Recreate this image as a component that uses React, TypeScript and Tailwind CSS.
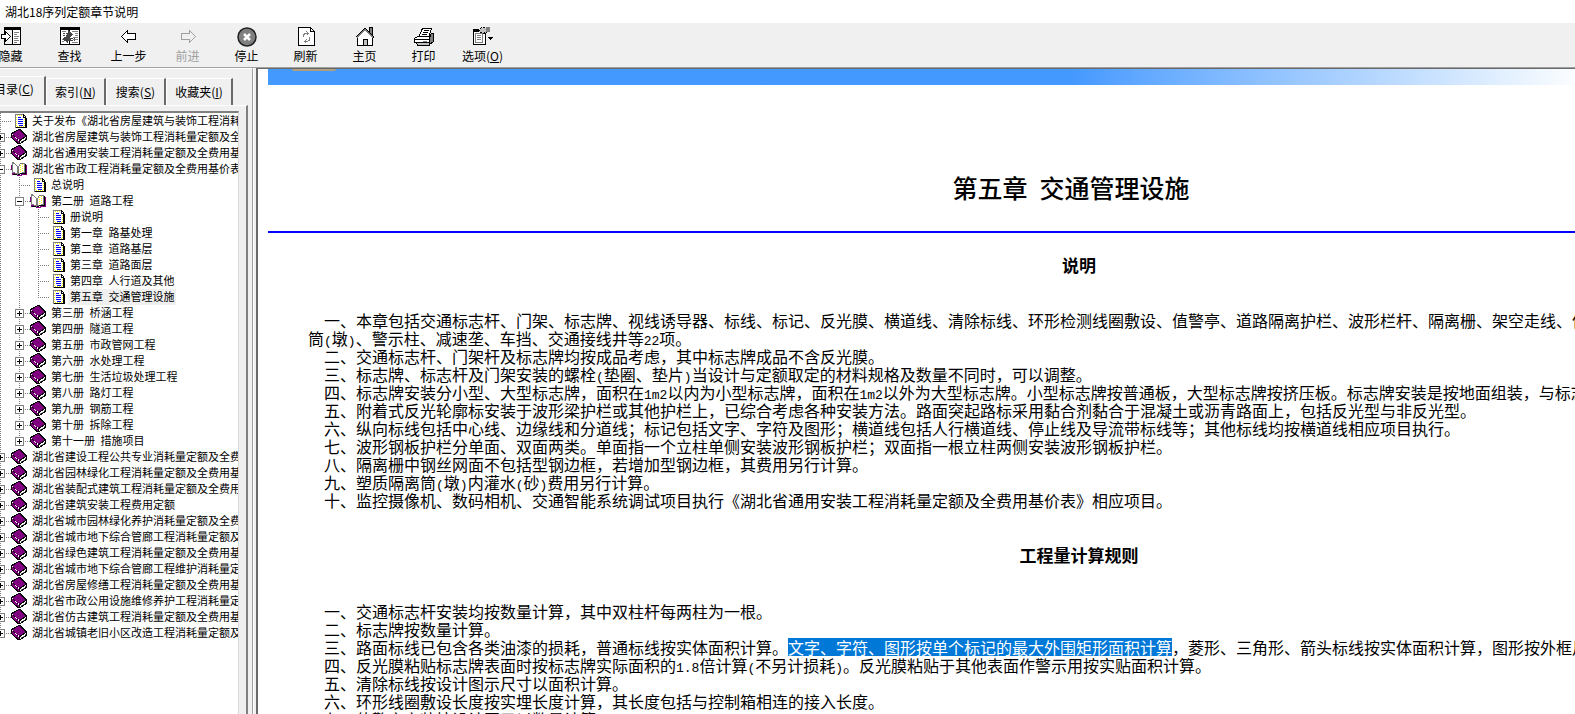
import React, { useState } from "react";
import clsx from "clsx";

type TreeItem = {
  label: string;
  kind?: "page";
  open?: boolean;
  children?: TreeItem[];
};

const toc: TreeItem[] = [
  { label: "关于发布《湖北省房屋建筑与装饰工程消耗量定额及全费用基价表》", kind: "page" },
  { label: "湖北省房屋建筑与装饰工程消耗量定额及全费用基价表", children: [] },
  { label: "湖北省通用安装工程消耗量定额及全费用基价表", children: [] },
  {
    label: "湖北省市政工程消耗量定额及全费用基价表",
    open: true,
    children: [
      { label: "总说明", kind: "page" },
      {
        label: "第二册 道路工程",
        open: true,
        children: [
          { label: "册说明", kind: "page" },
          { label: "第一章 路基处理", kind: "page" },
          { label: "第二章 道路基层", kind: "page" },
          { label: "第三章 道路面层", kind: "page" },
          { label: "第四章 人行道及其他", kind: "page" },
          { label: "第五章 交通管理设施", kind: "page" },
        ],
      },
      { label: "第三册 桥涵工程", children: [] },
      { label: "第四册 隧道工程", children: [] },
      { label: "第五册 市政管网工程", children: [] },
      { label: "第六册 水处理工程", children: [] },
      { label: "第七册 生活垃圾处理工程", children: [] },
      { label: "第八册 路灯工程", children: [] },
      { label: "第九册 钢筋工程", children: [] },
      { label: "第十册 拆除工程", children: [] },
      { label: "第十一册 措施项目", children: [] },
    ],
  },
  { label: "湖北省建设工程公共专业消耗量定额及全费用基价表", children: [] },
  { label: "湖北省园林绿化工程消耗量定额及全费用基价表", children: [] },
  { label: "湖北省装配式建筑工程消耗量定额及全费用基价表", children: [] },
  { label: "湖北省建筑安装工程费用定额", children: [] },
  { label: "湖北省城市园林绿化养护消耗量定额及全费用基价表", children: [] },
  { label: "湖北省城市地下综合管廊工程消耗量定额及全费用基价表", children: [] },
  { label: "湖北省绿色建筑工程消耗量定额及全费用基价表", children: [] },
  { label: "湖北省城市地下综合管廊工程维护消耗量定额", children: [] },
  { label: "湖北省房屋修缮工程消耗量定额及全费用基价表", children: [] },
  { label: "湖北省市政公用设施维修养护工程消耗量定额", children: [] },
  { label: "湖北省仿古建筑工程消耗量定额及全费用基价表", children: [] },
  { label: "湖北省城镇老旧小区改造工程消耗量定额及全费用基价表", children: [] },
];

const notes = [
  "一、本章包括交通标志杆、门架、标志牌、视线诱导器、标线、标记、反光膜、横道线、清除标线、环形检测线圈敷设、值警亭、道路隔离护栏、波形栏杆、隔离栅、架空走线、信\n筒(墩)、警示柱、减速垄、车挡、交通接线井等22项。",
  "二、交通标志杆、门架杆及标志牌均按成品考虑，其中标志牌成品不含反光膜。",
  "三、标志牌、标志杆及门架安装的螺栓(垫圈、垫片)当设计与定额取定的材料规格及数量不同时，可以调整。",
  "四、标志牌安装分小型、大型标志牌，面积在1m2以内为小型标志牌，面积在1m2以外为大型标志牌。小型标志牌按普通板，大型标志牌按挤压板。标志牌安装是按地面组装，与标志",
  "五、附着式反光轮廓标安装于波形梁护栏或其他护栏上，已综合考虑各种安装方法。路面突起路标采用黏合剂黏合于混凝土或沥青路面上，包括反光型与非反光型。",
  "六、纵向标线包括中心线、边缘线和分道线；标记包括文字、字符及图形；横道线包括人行横道线、停止线及导流带标线等；其他标线均按横道线相应项目执行。",
  "七、波形钢板护栏分单面、双面两类。单面指一个立柱单侧安装波形钢板护栏；双面指一根立柱两侧安装波形钢板护栏。",
  "八、隔离栅中钢丝网面不包括型钢边框，若增加型钢边框，其费用另行计算。",
  "九、塑质隔离筒(墩)内灌水(砂)费用另行计算。",
  "十、监控摄像机、数码相机、交通智能系统调试项目执行《湖北省通用安装工程消耗量定额及全费用基价表》相应项目。",
];

// Half-width characters are set in the monospaced face
function Mixed({ text, latin }: { text: string; latin: string }) {
  return (
    <>
      {text.split(/([ -~]+)/).map((part, i) =>
        i % 2 ? (
          <span key={i} className={clsx("font-['Liberation_Mono'] whitespace-pre", latin)}>
            {part}
          </span>
        ) : (
          part
        ),
      )}
    </>
  );
}

function Para({ children }: { children: React.ReactNode }) {
  return (
    <p className="indent-4 whitespace-pre">
      {React.Children.map(children, (c) =>
        typeof c === "string" ? <Mixed text={c} latin="text-[13px] leading-[0]" /> : c,
      )}
    </p>
  );
}

/* ---------- tree icons ---------- */

function PageIcon() {
  return (
    <svg width="16" height="16" viewBox="0 0 16 16" shapeRendering="crispEdges">
      <path d="M4 1h8l3 3v11H4z" fill="#fff" />
      <path d="M4 1h8v1H4zM4 1h1v14H4z" fill="#808080" />
      <path d="M5 14h10v1H5zM14 4h1v11h-1zM12 1h1v3h2v1h-3zM13 2h1v1h-1zM14 3h1v1h-1z" fill="#000" />
      <path d="M15 5h1v10h-1z" fill="#000" />
      <path d="M6 2.500h5M5.500 4v10M6 13.500h7M13.500 6v8" stroke="#ff0" strokeDasharray="1 1" fill="none" />
      <path d="M7 4h3v1H7zM7 6h5v1H7zM7 8h5v1H7zM7 10h5v1H7zM8 12h4v1H8z" fill="#00f" />
    </svg>
  );
}

function BookIcon() {
  return (
    <svg width="16" height="16" viewBox="0 0 16 16" shapeRendering="crispEdges">
      <path d="M8 0h1l7 7v4l-7 4H7L0 9V4z" fill="#000" />
      <path d="M8 1l7 6-7 4-7-6z" fill="#800080" />
      <path d="M1 6l7 6v2L1 9z" fill="#800080" />
      <path d="M9 12l6-4v2l-6 4z" fill="#fff" />
      <path d="M10 13h1v-1h-1zM12 12h1v-1h-1zM14 10h1V9h-1z" fill="#808080" />
      <path d="M1 5.500l7 6" stroke="#fff" strokeDasharray="1 1" fill="none" />
    </svg>
  );
}

function OpenBookIcon() {
  return (
    <svg width="16" height="16" viewBox="0 0 16 16" shapeRendering="crispEdges">
      <path d="M0 4h2v8h4l2 2h1l1-1h5V4h1v10h-5l-1 1H7l-2-1H1z" fill="#800080" />
      <path d="M1.500 1.500l2 1 3 3v8l-3-2h-2z" fill="#fff" stroke="#808080" />
      <path d="M7.500 5.500l2-3h4v9l-4 1-2 1z" fill="#fff" stroke="#808080" />
      <path d="M14.500 3v9h-4l-3 2" fill="none" stroke="#000" />
      <path d="M9.500 4v7M11.500 3v8" stroke="#ff0" strokeDasharray="1 1" />
      <path d="M2 13h4v1H2z" fill="#000" />
    </svg>
  );
}

function Guide({ vertical, joint }: { vertical: "full" | "half" | "none"; joint?: boolean }) {
  return (
    <svg width="19" height="16" viewBox="0 0 19 16" className="shrink-0" shapeRendering="crispEdges">
      {vertical !== "none" && (
        <path
          d={vertical === "full" ? "M8.500 0v16" : "M8.500 0v8"}
          stroke="#808080"
          strokeDasharray="1 1"
        />
      )}
      {joint && <path d="M8 8.500h11" stroke="#808080" strokeDasharray="1 1" />}
    </svg>
  );
}

function Branch({ items, rails, selected, onSelect }: {
  items: TreeItem[];
  rails: boolean[];
  selected: string;
  onSelect: (label: string) => void;
}) {
  return (
    <ul>
      {items.map((item, i) => (
        <Node
          key={item.label}
          item={item}
          rails={rails}
          last={i === items.length - 1}
          selected={selected}
          onSelect={onSelect}
        />
      ))}
    </ul>
  );
}

function Node({ item, rails, last, selected, onSelect }: {
  item: TreeItem;
  rails: boolean[];
  last: boolean;
  selected: string;
  onSelect: (label: string) => void;
}) {
  const [open, setOpen] = useState(!!item.open);

  return (
    <li>
      <div className="flex h-4 items-center">
        {rails.map((on, i) => (
          <Guide key={i} vertical={on ? "full" : "none"} />
        ))}
        <div className="relative flex">
          <Guide vertical={last ? "half" : "full"} joint />
          {item.children && (
            <button
              aria-label={open ? "折叠" : "展开"}
              onClick={() => setOpen(!open)}
              className="absolute top-1 left-1 h-[9px] w-[9px] bg-white"
            >
              <svg width="9" height="9" viewBox="0 0 9 9" shapeRendering="crispEdges">
                <path d="M0 0h9v9H0zM1 1v7h7V1z" fill="#808080" fillRule="evenodd" />
                <path d="M2 4h5v1H2z" fill="#000" />
                {!open && <path d="M4 2h1v5H4z" fill="#000" />}
              </svg>
            </button>
          )}
        </div>
        <span className="shrink-0">
          {item.kind === "page" ? <PageIcon /> : open ? <OpenBookIcon /> : <BookIcon />}
        </span>
        <button
          onClick={() => onSelect(item.label)}
          className={clsx(
            "ml-[3px] h-4 shrink-0 px-0.5 pb-0.5 leading-[14px] whitespace-pre",
            selected === item.label && "bg-[#f0f0f0]",
          )}
        >
          <Mixed text={item.label} latin="text-[9px] leading-[0]" />
        </button>
      </div>
      {open && item.children && (
        <Branch items={item.children} rails={[...rails, !last]} selected={selected} onSelect={onSelect} />
      )}
    </li>
  );
}

/* ---------- toolbar ---------- */

function Glyph({ children }: { children: React.ReactNode }) {
  return (
    <svg width="20" height="20" viewBox="0 0 20 20" shapeRendering="crispEdges" fill="none">
      {children}
    </svg>
  );
}

const tools: { label: React.ReactNode; id: string; disabled?: boolean; icon: React.ReactNode }[] = [
  {
    id: "hide",
    label: "隐藏",
    icon: (
      <Glyph>
        <path d="M3 0h17v18H3z" fill="#000" />
        <path d="M4 3h7v14H4z" fill="#f0f0f0" />
        <path d="M12 3h7v14h-7z" fill="#fff" />
        <path d="M13 5.500h5M13 7.500h3M13 9.500h5M13 11.500h4M13 13.500h5M13 15.500h3" stroke="#808080" />
        <path d="M.5 7.500h4v-3l5 5-5 5v-3h-4z" fill="#fff" stroke="#000" />
      </Glyph>
    ),
  },
  {
    id: "find",
    label: "查找",
    icon: (
      <Glyph>
        <path d="M0 0h20v18H0z" fill="#000" />
        <path d="M1 3h8v14H1zM10 3h9v14h-9z" fill="#fff" />
        <path d="M2 4.500h4M2 12.500h1M2 14.500h2M12 4.500h6M15 6.500h3M15 8.500h3M13 10.500h5M13 12.500h5M12 15.500h6" stroke="#808080" />
        <path d="M3 6.500h4M3 8.500h4" stroke="#444" strokeDasharray="2 1" />
        <path d="M8 3l5 4-5 5V9H7V6h1z" fill="#444" />
        <path d="M8 8v3h3v3H8v2l-6-4z" fill="#444" />
        <path d="M11 11.500h4M11 13.500h4" stroke="#444" strokeDasharray="2 1" />
      </Glyph>
    ),
  },
  {
    id: "back",
    label: "上一步",
    icon: (
      <Glyph>
        <path d="M2.500 9.500l6-6v3h8v6h-8v3z" fill="#fff" stroke="#000" />
      </Glyph>
    ),
  },
  {
    id: "forward",
    label: "前进",
    disabled: true,
    icon: (
      <Glyph>
        <path d="M17.500 9.500l-6-6v3h-8v6h8v3z" fill="#f0f0f0" stroke="#a0a0a0" />
      </Glyph>
    ),
  },
  {
    id: "stop",
    label: "停止",
    icon: (
      <svg width="20" height="20" viewBox="0 0 20 20">
        <circle cx="10" cy="10" r="9" fill="#808080" stroke="#222" strokeWidth="1.500" />
        <path d="M7 7l6 6M13 7l-6 6" stroke="#fff" strokeWidth="2.500" />
      </svg>
    ),
  },
  {
    id: "refresh",
    label: "刷新",
    icon: (
      <Glyph>
        <path d="M2.500.5h12l4 4v14h-16z" fill="#fff" stroke="#000" />
        <path d="M14.500.5v4h4" stroke="#000" />
        <path d="M7.500 10V7.500l2-1h3M10.500 4.500l2 2-2 2M13.500 10v3l-2 1.500h-3M10.500 12.500l-2 2 2 2" stroke="#808080" />
      </Glyph>
    ),
  },
  {
    id: "home",
    label: "主页",
    icon: (
      <Glyph>
        <path d="M14 0h3v8h-3z" fill="#808080" stroke="#000" />
        <path d="M2.500 9v9.500h15V9L10 3z" fill="#fff" stroke="#000" />
        <path d="M.5 10.500L10 1l9 9.500" stroke="#000" />
        <path d="M2 10.500l8-8 8 8" stroke="#808080" strokeWidth="1.500" />
        <path d="M8.500 12.500h4v6h-4z" fill="#c0c0c0" stroke="#000" />
      </Glyph>
    ),
  },
  {
    id: "print",
    label: "打印",
    icon: (
      <Glyph>
        <path d="M4.500 10.500l4-9h9l-3 9z" fill="#fff" stroke="#000" />
        <path d="M10 3.500h5M9 5.500h5M8 7.500h5" stroke="#000" />
        <path d="M14.500 11.500l3-5h2v8l-4 3z" fill="#808080" stroke="#000" />
        <path d="M.5 11.500l3-2h13l-2 3H.5zM.5 12.500h15v3H.5z" fill="#fff" stroke="#000" />
        <path d="M2.500 15.500h13v3h-12z" fill="#c0c0c0" stroke="#000" />
        <path d="M9 14.500h4" stroke="#808080" />
      </Glyph>
    ),
  },
  {
    id: "options",
    label: (
      <>
        选项(<u>O</u>)
      </>
    ),
    icon: (
      <Glyph>
        <path d="M0 2h6v3H0z" fill="#000" />
        <path d="M.5 4.500h12v13H.5z" fill="#fff" stroke="#000" />
        <path d="M2.500 6.500h7v9h-7z" fill="#fff" stroke="#808080" />
        <path d="M4 8.500h4M4 10.500h4M4 12.500h4" stroke="#808080" />
        <path d="M5.500 4.500l3-4h6v4l-4 2z" fill="#c0c0c0" stroke="#000" strokeDasharray="2 1" />
        <path d="M13 0h4v5h-4z" fill="#808080" />
        <path d="M15 10h5l-2.500 3z" fill="#000" />
      </Glyph>
    ),
  },
];

const tabs = [
  { id: "contents", label: "目录", hotkey: "C", width: "w-[62px]" },
  { id: "index", label: "索引", hotkey: "N", width: "w-[60px]" },
  { id: "search", label: "搜索", hotkey: "S", width: "w-[60px]" },
  { id: "favorites", label: "收藏夹", hotkey: "I", width: "w-[67px]" },
];

function App() {
  const [tab, setTab] = useState("contents");
  const [selected, setSelected] = useState("第五章 交通管理设施");

  return (
    <div className="flex h-screen flex-col overflow-hidden bg-white font-['Noto_Sans_CJK_SC',sans-serif] text-xs text-black">
      <header className="h-[23px] shrink-0 pl-[5px] leading-[23px]">湖北18序列定额章节说明</header>

      {/* Toolbar */}
      <div className="h-[45px] shrink-0 overflow-hidden border-b border-[#a0a0a0] bg-[#f0f0f0]">
        <div className="-ml-[19px] flex pt-1">
          {tools.map((t) => (
            <button
              key={t.id}
              disabled={t.disabled}
              className="flex w-[59px] shrink-0 flex-col items-center leading-[18px] disabled:text-[#a0a0a0]"
            >
              {t.icon}
              <span>{t.label}</span>
            </button>
          ))}
        </div>
      </div>

      <div className="flex min-h-0 flex-1">
        {/* Navigation pane */}
        <aside className="flex w-[253px] shrink-0 flex-col overflow-hidden border-t border-r border-t-white border-r-[#a0a0a0] bg-[#f0f0f0] pr-1">
          <div className="-ml-4 flex h-9 items-end" role="tablist">
            {tabs.map((t) => (
              <button
                key={t.id}
                role="tab"
                aria-selected={tab === t.id}
                onClick={() => setTab(t.id)}
                className={clsx(
                  "shrink-0 border-t border-r-2 border-t-white border-r-[#696969]",
                  t.width,
                  tab === t.id ? "h-[29px] pb-1" : "h-[27px] border-l border-l-white",
                )}
              >
                {t.label}(<u>{t.hotkey}</u>)
              </button>
            ))}
          </div>
          <div className="flex min-h-0 flex-1 flex-col border-t border-r-2 border-t-white border-r-[#808080] pt-[5px] pr-[7px]">
            <div className="min-h-0 flex-1 overflow-hidden border-t-2 border-r border-t-[#808080] border-r-[#d9d9d9] bg-white text-[11px]">
              <nav className="-ml-2">
                <Branch items={toc} rails={[]} selected={selected} onSelect={setSelected} />
              </nav>
            </div>
          </div>
        </aside>
        <div className="w-[3px] shrink-0 border-l border-white bg-[#f0f0f0]" />

        {/* Document */}
        <main className="min-w-0 flex-1 overflow-hidden border-t border-l-2 border-[#696969] pl-2.5">
          <article className="w-[1606px] text-base leading-[18px]">
            <div className="flex h-4 bg-linear-to-r from-[#4499ff] from-50% to-white to-82% pl-6">
              <div className="h-0.5 w-11 rounded-b-full bg-[#b0a080]" />
            </div>
            <h1 className="mt-[87px] text-center text-[25px] leading-[30px] font-medium">
              <Mixed text="第五章 交通管理设施" latin="text-xl leading-[0]" />
            </h1>
            <hr className="mt-[29px] border-t-2 border-[#0000ff]" />
            <div className="mr-6 ml-10">
              <h2 className="mt-[22px] mb-9 text-center text-[17px] leading-5 font-bold">说明</h2>
              {notes.map((n) => (
                <Para key={n}>{n}</Para>
              ))}
              <h2 className="mt-9 mb-[37px] text-center text-[17px] leading-5 font-bold">工程量计算规则</h2>
              <Para>一、交通标志杆安装均按数量计算，其中双柱杆每两柱为一根。</Para>
              <Para>二、标志牌按数量计算。</Para>
              <Para>
                三、路面标线已包含各类油漆的损耗，普通标线按实体面积计算。
                <mark className="inline-block h-[18px] bg-[#0078d7] indent-0 text-white">
                  文字、字符、图形按单个标记的最大外围矩形面积计算
                </mark>
                ，菱形、三角形、箭头标线按实体面积计算，图形按外框尺
              </Para>
              <Para>四、反光膜粘贴标志牌表面时按标志牌实际面积的1.8倍计算(不另计损耗)。反光膜粘贴于其他表面作警示用按实贴面积计算。</Para>
              <Para>五、清除标线按设计图示尺寸以面积计算。</Para>
              <Para>六、环形线圈敷设长度按实埋长度计算，其长度包括与控制箱相连的接入长度。</Para>
              <Para>七、值警亭安装按设计图示以数量计算。</Para>
            </div>
          </article>
        </main>
      </div>
    </div>
  );
}

export default App;
